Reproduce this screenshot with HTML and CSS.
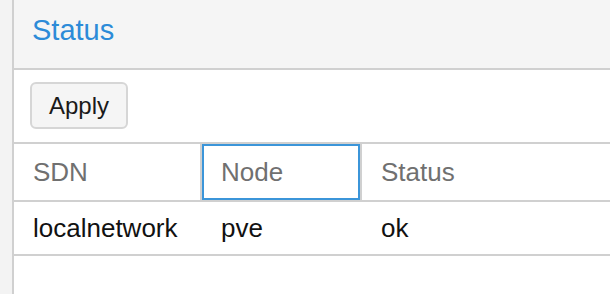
FILE: index.html
```html
<!DOCTYPE html>
<html lang="en">
<head>
  <meta charset="UTF-8">
  <meta name="viewport" content="width=device-width, initial-scale=1.0">
  <title>SDN Status</title>
  <link rel="stylesheet" href="styles.css">
</head>
<body>
  <div class="side"></div>
  <div class="panel">
    <div class="panel-header">
      <span class="panel-title">Status</span>
    </div>
    <div class="toolbar">
      <button class="btn">Apply</button>
    </div>
    <div class="grid">
      <div class="grid-head">
        <div class="col col-sdn">SDN</div>
        <div class="col col-node focused">Node</div>
        <div class="col col-status">Status</div>
      </div>
      <div class="grid-row">
        <div class="cell col-sdn">localnetwork</div>
        <div class="cell col-node">pve</div>
        <div class="cell col-status">ok</div>
      </div>
    </div>
  </div>
</body>
</html>
```

FILE: styles.css
```css
html, body {
  height: 100%;
}
body {
  margin: 0;
  display: flex;
  font-family: "Liberation Sans", Arial, sans-serif;
  background: #fff;
  overflow: hidden;
}
.side {
  width: 12px;
  flex: none;
  background: #f3f3f3;
  border-right: 2px solid #d0d0d0;
}
.panel {
  flex: 1;
  display: flex;
  flex-direction: column;
}
.panel-header {
  height: 70px;
  box-sizing: border-box;
  padding: 13px 0 0 18px;
  background: #f5f5f5;
  border-bottom: 2px solid #d0d0d0;
}
.panel-title {
  display: block;
  font-size: 29px;
  line-height: 34px;
  color: #2c8bd8;
}
.toolbar {
  height: 74px;
  box-sizing: border-box;
  padding: 12px 16px;
  border-bottom: 2px solid #d0d0d0;
}
.btn {
  width: 98px;
  height: 47px;
  padding: 0;
  font-family: inherit;
  font-size: 24px;
  color: #1a1a1a;
  background: #f5f5f5;
  border: 2px solid #d6d6d6;
  border-radius: 6px;
}
.grid-head,
.grid-row {
  display: grid;
  grid-template-columns: 188px 160px 1fr;
  border-bottom: 2px solid #d0d0d0;
}
.grid-head {
  height: 56px;
}
.grid-row {
  height: 52px;
}
.col,
.cell {
  display: flex;
  align-items: center;
  box-sizing: border-box;
  padding-left: 19px;
  font-size: 26px;
}
.col {
  color: #707070;
  border-right: 2px solid #d0d0d0;
}
.col-status {
  border-right: none;
}
.cell {
  color: #111;
}
.focused {
  box-shadow: inset 0 0 0 2px #3b95d9;
}
```
